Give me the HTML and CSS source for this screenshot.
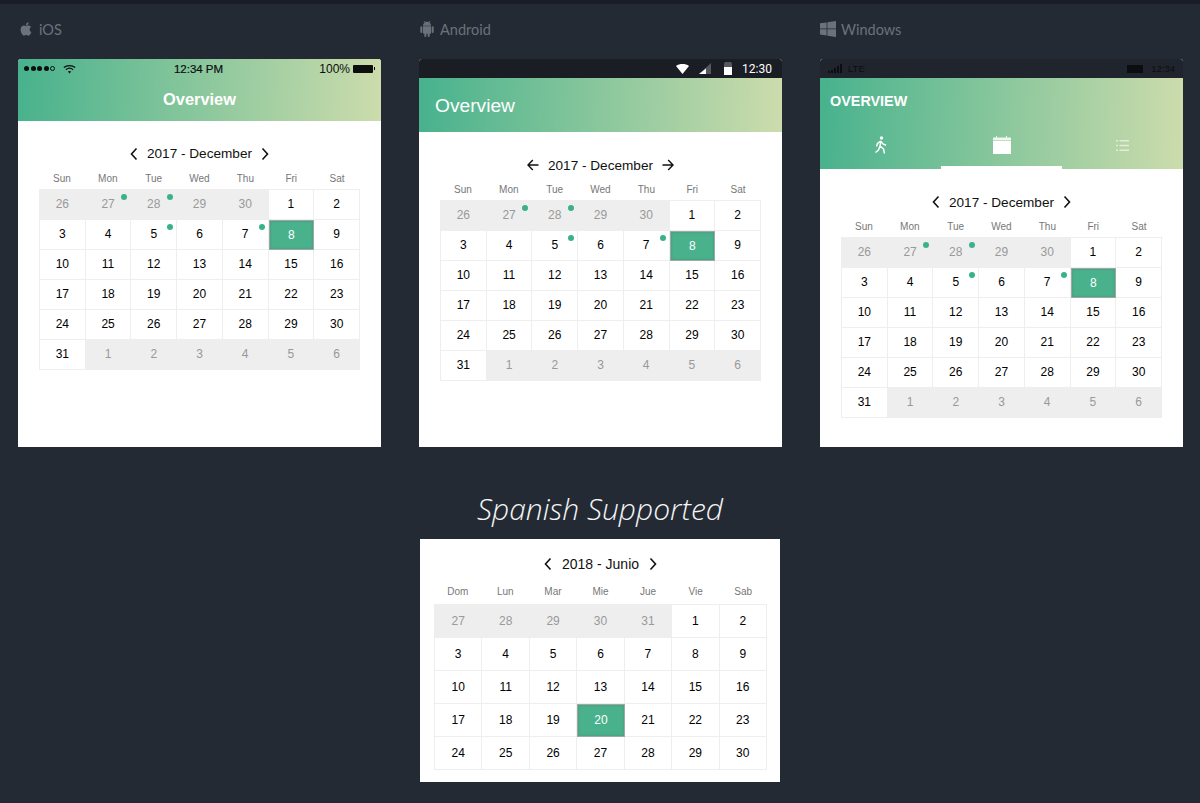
FILE: index.html
```html
<!DOCTYPE html>
<html lang="en">
<head>
    <meta charset="UTF-8">
    <meta name="viewport" content="width=device-width, initial-scale=1.0">
    <title>Calendar</title>
    <link rel="stylesheet" href="styles.css">
</head>
<body>
    <div class="topStrip"></div>
    <div class="platforms">
        <!-- iOS -->
        <section>
            <div class="label">
                <svg class="labelIcon" viewBox="0 0 24 24"><path d="M18.71 19.5c-.83 1.24-1.71 2.45-3.05 2.47-1.34.03-1.77-.79-3.29-.79-1.53 0-2 .77-3.27.82-1.31.05-2.3-1.32-3.14-2.53C4.25 17 2.94 12.45 4.7 9.39c.87-1.52 2.43-2.48 4.12-2.51 1.28-.02 2.5.87 3.29.87.78 0 2.26-1.07 3.81-.91.65.03 2.47.26 3.64 1.98-.09.06-2.17 1.28-2.15 3.81.03 3.02 2.65 4.03 2.68 4.04-.03.07-.42 1.44-1.38 2.83M13 3.5c.73-.83 1.94-1.46 2.94-1.5.13 1.17-.34 2.35-1.04 3.19-.69.85-1.83 1.51-2.95 1.42-.15-1.15.41-2.35 1.05-3.11z"/></svg>
                <span>iOS</span>
            </div>
            <div class="phone">
                <div class="head headIos">
                    <div class="iosStatus">
                        <div class="iosLeft">
                            <i class="sig"></i><i class="sig"></i><i class="sig"></i><i class="sig"></i><i class="sig sigEmpty"></i>
                            <svg class="wifi" viewBox="0 0 16 12"><path d="M1 4.2C4.8 1 11.2 1 15 4.2" fill="none" stroke="#0c0f0e" stroke-width="1.5"/><path d="M3.5 6.8c2.6-2 6.4-2 9 0" fill="none" stroke="#0c0f0e" stroke-width="1.5"/><path d="M6 9.2c1.2-.9 2.8-.9 4 0L8 11.4z" fill="#0c0f0e"/></svg>
                        </div>
                        <span class="iosTime">12:34 PM</span>
                        <div class="iosRight">
                            <span>100%</span>
                            <span class="iosBattery"></span>
                        </div>
                    </div>
                    <div class="iosTitle">Overview</div>
                </div>
                <div class="cal calIos">
                    <div class="calTitle">
                        <svg class="chev" viewBox="0 0 10 14"><path d="M7.5 1.5 2.5 7l5 5.5"/></svg>
                        <span>2017 - December</span>
                        <svg class="chev" viewBox="0 0 10 14"><path d="M2.5 1.5 7.5 7l-5 5.5"/></svg>
                    </div>
                    <div class="week"><span>Sun</span><span>Mon</span><span>Tue</span><span>Wed</span><span>Thu</span><span>Fri</span><span>Sat</span></div>
                    <div class="days">
                        <div class="off">26</div><div class="off dot">27</div><div class="off dot">28</div><div class="off">29</div><div class="off">30</div><div>1</div><div>2</div>
                        <div>3</div><div>4</div><div class="dot">5</div><div>6</div><div class="dot">7</div><div class="on">8</div><div>9</div>
                        <div>10</div><div>11</div><div>12</div><div>13</div><div>14</div><div>15</div><div>16</div>
                        <div>17</div><div>18</div><div>19</div><div>20</div><div>21</div><div>22</div><div>23</div>
                        <div>24</div><div>25</div><div>26</div><div>27</div><div>28</div><div>29</div><div>30</div>
                        <div>31</div><div class="off">1</div><div class="off">2</div><div class="off">3</div><div class="off">4</div><div class="off">5</div><div class="off">6</div>
                    </div>
                </div>
            </div>
        </section>

        <!-- Android -->
        <section>
            <div class="label">
                <svg class="labelIcon" viewBox="0 0 24 24"><path d="M15,5H14V4H15M10,5H9V4H10M15.53,2.16L16.84,0.85C17.03,0.66 17.03,0.34 16.84,0.14C16.64,-0.05 16.32,-0.05 16.13,0.14L14.65,1.62C13.85,1.23 12.95,1 12,1C11.04,1 10.14,1.23 9.34,1.63L7.85,0.14C7.66,-0.05 7.34,-0.05 7.15,0.14C6.95,0.34 6.95,0.66 7.15,0.85L8.46,2.16C6.97,3.26 6,5 6,7H18C18,5 17,3.25 15.53,2.16M20.5,8A1.5,1.5 0 0,0 19,9.5V16.5A1.5,1.5 0 0,0 20.5,18A1.5,1.5 0 0,0 22,16.5V9.5A1.5,1.5 0 0,0 20.5,8M3.5,8A1.5,1.5 0 0,0 2,9.5V16.5A1.5,1.5 0 0,0 3.5,18A1.5,1.5 0 0,0 5,16.5V9.5A1.5,1.5 0 0,0 3.5,8M6,18A1,1 0 0,0 7,19H8V22.5A1.5,1.5 0 0,0 9.5,24A1.5,1.5 0 0,0 11,22.5V19H13V22.5A1.5,1.5 0 0,0 14.5,24A1.5,1.5 0 0,0 16,22.5V19H17A1,1 0 0,0 18,18V8H6V18Z"/></svg>
                <span>Android</span>
            </div>
            <div class="phone">
                <div class="androidStatus">
                    <svg class="androidWifi" width="13" height="10" viewBox="0 0 13 10"><path d="M0 2C3.5-.6 9.5-.6 13 2L6.5 10z" fill="#fff"/></svg>
                    <svg width="12" height="11" viewBox="0 0 12 11"><path d="M12 0v11H0z" fill="#55595e"/><path d="M7 5.5V11H0z" fill="#fff"/></svg>
                    <span class="androidBattery"></span>
                    <span>12:30</span>
                </div>
                <div class="head headAndroid">Overview</div>
                <div class="cal">
                    <div class="calTitle calTitleAndroid">
                        <svg class="arrow" viewBox="0 0 12 12"><path d="M11.5 6H1M5.8 1 1 6l4.8 5"/></svg>
                        <span>2017 - December</span>
                        <svg class="arrow" viewBox="0 0 12 12"><path d="M.5 6H11M6.2 1 11 6l-4.8 5"/></svg>
                    </div>
                    <div class="week"><span>Sun</span><span>Mon</span><span>Tue</span><span>Wed</span><span>Thu</span><span>Fri</span><span>Sat</span></div>
                    <div class="days">
                        <div class="off">26</div><div class="off dot">27</div><div class="off dot">28</div><div class="off">29</div><div class="off">30</div><div>1</div><div>2</div>
                        <div>3</div><div>4</div><div class="dot">5</div><div>6</div><div class="dot">7</div><div class="on">8</div><div>9</div>
                        <div>10</div><div>11</div><div>12</div><div>13</div><div>14</div><div>15</div><div>16</div>
                        <div>17</div><div>18</div><div>19</div><div>20</div><div>21</div><div>22</div><div>23</div>
                        <div>24</div><div>25</div><div>26</div><div>27</div><div>28</div><div>29</div><div>30</div>
                        <div>31</div><div class="off">1</div><div class="off">2</div><div class="off">3</div><div class="off">4</div><div class="off">5</div><div class="off">6</div>
                    </div>
                </div>
            </div>
        </section>

        <!-- Windows -->
        <section>
            <div class="label">
                <svg class="labelIcon" viewBox="0 0 16 16"><path d="M0 2.3 6.6 1.4V7.5H0zM7.4 1.3 16 0V7.5H7.4zM0 8.3H6.6V14.5L0 13.6zM7.4 8.3H16V16L7.4 14.7z"/></svg>
                <span>Windows</span>
            </div>
            <div class="phone">
                <div class="winStatus">
                    <div class="winLeft">
                        <span class="bars"><i></i><i></i><i></i><i></i><i></i></span>
                        <span>LTE</span>
                    </div>
                    <div class="winRight">
                        <span class="winBattery"></span>
                        <span>12:34</span>
                    </div>
                </div>
                <div class="head headWin">
                    <div class="winTitle">OVERVIEW</div>
                    <div class="tabs">
                        <div class="tab">
                            <svg width="14" height="18" viewBox="0 0 14 18"><circle cx="7.5" cy="2" r="1.7" fill="#fff"/><path d="M6.8 5 3.5 7.5 2.5 10.5M6.8 5 6 10l3.5 3 1 4.5M6 10 4.5 14 1.5 16.5M7 5.5l2 2.5 3 1.2" fill="none" stroke="#fff" stroke-width="1.5"/></svg>
                        </div>
                        <div class="tab tabOn">
                            <svg width="18" height="18" viewBox="0 0 18 18"><path d="M0 1.5H3V0H4V1.5H13V0H14V1.5H18V4.5H0z" fill="#fff" opacity=".85"/><rect y="5" width="18" height="13" fill="#fff"/></svg>
                        </div>
                        <div class="tab">
                            <svg width="13" height="11" viewBox="0 0 13 11" opacity=".6"><path d="M0 0h2v1.5H0zM3.5 0H13v1.5H3.5zM0 4.7h2v1.5H0zM3.5 4.7H13v1.5H3.5zM0 9.4h2v1.5H0zM3.5 9.4H13v1.5H3.5z" fill="#fff"/></svg>
                        </div>
                    </div>
                </div>
                <div class="cal">
                    <div class="calTitle">
                        <svg class="chev" viewBox="0 0 10 14"><path d="M7.5 1.5 2.5 7l5 5.5"/></svg>
                        <span>2017 - December</span>
                        <svg class="chev" viewBox="0 0 10 14"><path d="M2.5 1.5 7.5 7l-5 5.5"/></svg>
                    </div>
                    <div class="week"><span>Sun</span><span>Mon</span><span>Tue</span><span>Wed</span><span>Thu</span><span>Fri</span><span>Sat</span></div>
                    <div class="days">
                        <div class="off">26</div><div class="off dot">27</div><div class="off dot">28</div><div class="off">29</div><div class="off">30</div><div>1</div><div>2</div>
                        <div>3</div><div>4</div><div class="dot">5</div><div>6</div><div class="dot">7</div><div class="on">8</div><div>9</div>
                        <div>10</div><div>11</div><div>12</div><div>13</div><div>14</div><div>15</div><div>16</div>
                        <div>17</div><div>18</div><div>19</div><div>20</div><div>21</div><div>22</div><div>23</div>
                        <div>24</div><div>25</div><div>26</div><div>27</div><div>28</div><div>29</div><div>30</div>
                        <div>31</div><div class="off">1</div><div class="off">2</div><div class="off">3</div><div class="off">4</div><div class="off">5</div><div class="off">6</div>
                    </div>
                </div>
            </div>
        </section>
    </div>

    <h2 class="spanish">Spanish Supported</h2>
    <div class="cal calEs">
        <div class="calTitle">
            <svg class="chev" viewBox="0 0 10 14"><path d="M7.5 1.5 2.5 7l5 5.5"/></svg>
            <span>2018 - Junio</span>
            <svg class="chev" viewBox="0 0 10 14"><path d="M2.5 1.5 7.5 7l-5 5.5"/></svg>
        </div>
        <div class="week"><span>Dom</span><span>Lun</span><span>Mar</span><span>Mie</span><span>Jue</span><span>Vie</span><span>Sab</span></div>
        <div class="days">
            <div class="off">27</div><div class="off">28</div><div class="off">29</div><div class="off">30</div><div class="off">31</div><div>1</div><div>2</div>
            <div>3</div><div>4</div><div>5</div><div>6</div><div>7</div><div>8</div><div>9</div>
            <div>10</div><div>11</div><div>12</div><div>13</div><div>14</div><div>15</div><div>16</div>
            <div>17</div><div>18</div><div>19</div><div class="on">20</div><div>21</div><div>22</div><div>23</div>
            <div>24</div><div>25</div><div>26</div><div>27</div><div>28</div><div>29</div><div>30</div>
        </div>
    </div>
</body>
</html>
```

FILE: styles.css
```css
* {
    margin: 0;
    padding: 0;
    box-sizing: border-box;
}
html, body {
    height: 803px;
    overflow: hidden;
}
body {
    background-color: #232a33;
    font-family: "Liberation Sans", Arial, sans-serif;
}
.topStrip {
    height: 4px;
    background-color: #1a1d28;
}
.platforms {
    display: grid;
    grid-template-columns: repeat(3, 363px);
    gap: 38px;
    padding: 16px 0 0 18px;
}

/* platform labels */
.label {
    display: flex;
    align-items: center;
    gap: 5px;
    height: 18px;
    margin-bottom: 21px;
    color: #6b727b;
    font-family: Lato, sans-serif;
    font-size: 14.5px;
}
.labelIcon {
    width: 16px;
    height: 16px;
    fill: #6b727b;
}

/* phone frames */
.phone {
    height: 388px;
    background-color: #fff;
    border-radius: 3px 3px 0 0;
    overflow: hidden;
}
.head {
    background: linear-gradient(92deg, #47b28d, #cddcac);
    color: #fff;
}

/* iOS */
.headIos {
    height: 62px;
}
.iosStatus {
    display: flex;
    align-items: center;
    justify-content: space-between;
    height: 19px;
    padding: 0 8px 0 6px;
    color: #0c0f0e;
    font-size: 12px;
}
.iosTime {
    font-size: 11.5px;
    -webkit-text-stroke: 0.2px #0c0f0e;
}
.iosLeft, .iosRight {
    flex: 1;
    display: flex;
    align-items: center;
    gap: 1.5px;
}
.iosRight {
    justify-content: flex-end;
    gap: 3px;
}
.sig {
    width: 5px;
    height: 5px;
    border-radius: 50%;
    background-color: #0c0f0e;
}
.sigEmpty {
    background-color: transparent;
    border: 1px solid #0c0f0e;
}
.wifi {
    width: 13px;
    height: 10px;
    margin-left: 6px;
}
.iosBattery {
    position: relative;
    width: 20px;
    height: 8px;
    background-color: #0c0f0e;
    border-radius: 1px;
}
.iosBattery::after {
    content: "";
    position: absolute;
    right: -2px;
    top: 2px;
    width: 1px;
    height: 3px;
    background-color: #0c0f0e;
}
.iosTitle {
    margin-top: 11px;
    text-align: center;
    font-size: 16.4px;
    font-weight: bold;
    line-height: 20px;
}

/* Android */
.androidStatus {
    display: flex;
    align-items: center;
    justify-content: flex-end;
    gap: 8px;
    height: 19px;
    padding-right: 10px;
    background-color: #1a1d24;
    color: #fff;
    font-family: Roboto, sans-serif;
    font-size: 12px;
}
.androidWifi {
    margin-right: 2px;
}
.androidBattery {
    width: 8px;
    height: 13px;
    margin: 0 2px 0 5px;
    background: linear-gradient(#55595e 40%, #fff 40%);
    border-radius: 2px 2px 0 0;
}
.headAndroid {
    display: flex;
    align-items: center;
    height: 54px;
    padding: 1px 0 0 16px;
    font-size: 19.2px;
}

/* Windows */
.winStatus {
    display: flex;
    align-items: center;
    justify-content: space-between;
    height: 19px;
    padding: 0 8px;
    background-color: #20252d;
    color: #0b0d10;
    font-size: 9.5px;
}
.winLeft, .winRight {
    display: flex;
    align-items: center;
    gap: 6px;
}
.bars {
    display: flex;
    align-items: flex-end;
    gap: 1px;
    height: 9px;
}
.bars i {
    width: 2px;
    background-color: #0b0d10;
}
.bars i:nth-child(1) { height: 2px; }
.bars i:nth-child(2) { height: 3px; }
.bars i:nth-child(3) { height: 5px; }
.bars i:nth-child(4) { height: 7px; }
.bars i:nth-child(5) { height: 9px; }
.winBattery {
    width: 16px;
    height: 8px;
    margin-right: 2px;
    background-color: #0b0d10;
}
.headWin {
    height: 91px;
}
.winTitle {
    height: 50px;
    padding: 14px 0 0 10px;
    font-size: 14.4px;
    font-weight: bold;
    line-height: 18px;
}
.tabs {
    display: grid;
    grid-template-columns: repeat(3, 1fr);
    height: 41px;
}
.tab {
    display: flex;
    align-items: center;
    justify-content: center;
    padding-bottom: 9px;
    padding-top: 2px;
}
.tabOn {
    border-bottom: 3px solid #fff;
    padding-bottom: 6px;
}

/* calendar */
.cal {
    padding: 23px 21px 0;
}
.calTitle {
    display: flex;
    align-items: center;
    justify-content: center;
    gap: 8px;
    height: 20px;
    font-size: 13.6px;
    color: #111;
}
.calIos .calTitle {
    padding-bottom: 1px;
}
.chev {
    width: 10px;
    height: 14px;
    fill: none;
    stroke: #111;
    stroke-width: 1.6;
}
.arrow {
    width: 12px;
    height: 12px;
    fill: none;
    stroke: #111;
    stroke-width: 1.4;
}
.calTitleAndroid {
    gap: 9px;
}
.week {
    display: grid;
    grid-template-columns: repeat(7, 1fr);
    height: 25px;
    padding-top: 4px;
    color: #777;
    font-size: 10px;
    line-height: 21px;
    text-align: center;
}
.days {
    display: grid;
    grid-template-columns: repeat(7, 1fr);
    grid-auto-rows: 30px;
    border-top: 1px solid #eee;
    border-left: 1px solid #eee;
    color: #000;
    font-size: 12px;
}
.days div {
    position: relative;
    display: flex;
    align-items: center;
    justify-content: center;
    padding-bottom: 1px;
    border-right: 1px solid #eee;
    border-bottom: 1px solid #eee;
}
.days .off {
    background-color: #eee;
    color: #999;
}
.days .on {
    background-color: #49b28d;
    border: 1px solid #9aaba3;
    box-shadow: inset 0 0 3px rgba(90, 110, 100, .5);
    color: #fff;
}
.days .dot::after {
    content: "";
    position: absolute;
    top: 4px;
    right: 3px;
    width: 6px;
    height: 6px;
    border-radius: 50%;
    background-color: #3bb18b;
}

/* spanish block */
.spanish {
    height: 40px;
    margin-top: 42px;
    margin-bottom: 10px;
    color: #f4f5f6;
    font-family: "Open Sans", sans-serif;
    font-size: 30px;
    font-style: italic;
    font-weight: 300;
    line-height: 40px;
    text-align: center;
}
.calEs {
    width: 360px;
    height: 243px;
    margin: 0 auto;
    padding: 15px 13px 0 14px;
    background-color: #fff;
}
.calEs .calTitle {
    gap: 9px;
    font-size: 14px;
}
.calEs .week {
    height: 30px;
    padding-top: 6px;
    line-height: 24px;
}
.calEs .days {
    grid-auto-rows: 33px;
}
```
